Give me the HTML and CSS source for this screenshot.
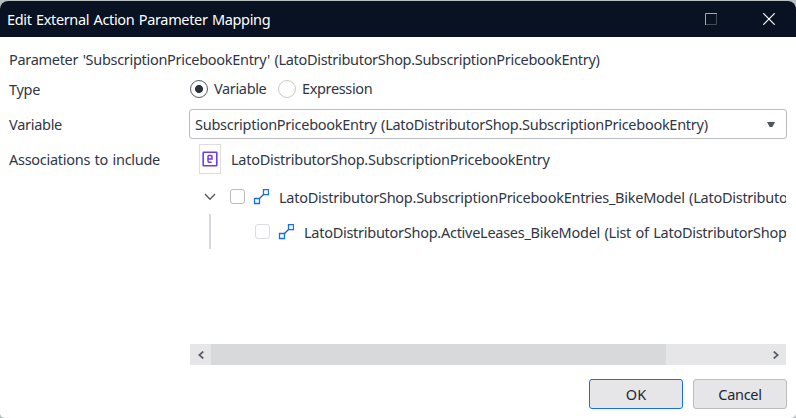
FILE: index.html
```html
<!DOCTYPE html>
<html lang="en">
<head>
<meta charset="utf-8">
<title>Edit External Action Parameter Mapping</title>
<link rel="stylesheet" href="styles.css">
</head>
<body>
<div class="dialog">
  <header class="titlebar">
    <span class="title">Edit External Action Parameter Mapping</span>
    <svg class="maximize" width="12" height="12" viewBox="0 0 12 12"><path d="M.5 12V.5H12" fill="none" stroke="#a4a9b0"/><path d="M1 11.5h10.5V1" fill="none" stroke="#454d58"/></svg>
    <svg class="close" width="12" height="12" viewBox="0 0 12 12"><path d="M.3.3l11.4 11.4M11.7.3L.3 11.7" stroke="#fff" stroke-width="1.2"/></svg>
  </header>
  <main class="content">
    <div class="param"><span class="param-text">Parameter 'SubscriptionPricebookEntry' (LatoDistributorShop.SubscriptionPricebookEntry)</span></div>
    <div class="row type-row">
      <span class="label">Type</span>
      <div class="radios">
        <span class="radio checked"></span><span class="radio-label first">Variable</span>
        <span class="radio"></span><span class="radio-label">Expression</span>
      </div>
    </div>
    <div class="row variable-row">
      <span class="label">Variable</span>
      <div class="select">
        <span class="select-text">SubscriptionPricebookEntry (LatoDistributorShop.SubscriptionPricebookEntry)</span>
        <svg width="8" height="5" viewBox="0 0 8 5"><path d="M0 0h8L5.3 5H2.7z" fill="#4e5362"/></svg>
      </div>
    </div>
    <div class="row assoc-row">
      <span class="label assoc-label">Associations to include</span>
      <div class="tree">
        <div class="root">
          <span class="entity-box"><svg width="16" height="16" viewBox="0 0 16 16"><rect x="1.2" y="1.2" width="13.6" height="13.6" rx=".5" fill="#fff" stroke="#6c3bf5" stroke-width="1.6"/><path d="M6 8h4V5.6Q10 4.6 9 4.6H7Q6 4.6 6 5.6V10Q6 11.2 7 11.2h2.6" fill="none" stroke="#6c3bf5" stroke-width="1.5"/></svg></span>
          <span class="root-text">LatoDistributorShop.SubscriptionPricebookEntry</span>
        </div>
        <div class="node level-one">
          <svg class="chevron" width="12" height="8" viewBox="0 0 12 8"><path d="M1 1l5 5.3L11 1" fill="none" stroke="#555b69" stroke-width="1.4"/></svg>
          <span class="check"></span>
          <svg class="assoc" width="16" height="16" viewBox="0 0 16 16"><path d="M6.5 9.5l4-4" stroke="#4d5566" stroke-width="1.2"/><path d="M1.5 9.5h5v5h-5zM10.5.6h5v5h-5z" fill="#fff" stroke="#146ff8" stroke-width="1.3"/></svg>
          <span class="node-text one">LatoDistributorShop.SubscriptionPricebookEntries_BikeModel (LatoDistributo</span>
        </div>
        <div class="node level-two">
          <span class="guide"></span>
          <span class="check disabled"></span>
          <svg class="assoc" width="16" height="16" viewBox="0 0 16 16"><path d="M6.5 9.5l4-4" stroke="#4d5566" stroke-width="1.2"/><path d="M1.5 9.5h5v5h-5zM10.5.6h5v5h-5z" fill="#fff" stroke="#146ff8" stroke-width="1.3"/></svg>
          <span class="node-text two">LatoDistributorShop.ActiveLeases_BikeModel (List of LatoDistributorShop</span>
        </div>
        <div class="scrollbar">
          <span class="arrow"><svg width="6" height="8" viewBox="0 0 6 8"><path d="M5.3.5L1.2 4l4.1 3.5" fill="none" stroke="#555b69" stroke-width="1.7"/></svg></span>
          <span class="thumb"></span>
          <span class="arrow end"><svg width="6" height="8" viewBox="0 0 6 8"><path d="M.7.5L4.8 4 .7 7.5" fill="none" stroke="#555b69" stroke-width="1.7"/></svg></span>
        </div>
      </div>
    </div>
    <footer class="actions">
      <button class="button primary"><span class="ok">OK</span></button>
      <button class="button"><span class="cancel">Cancel</span></button>
    </footer>
  </main>
</div>
</body>
</html>
```
FILE: styles.css
```css
* { box-sizing: border-box; }
body {
  margin: 0;
  background: #b9bebf;
  font-family: "Noto Sans", "Open Sans", sans-serif;
  font-size: 14.5px;
  line-height: 20px;
  word-spacing: 1px;
  color: #2f3646;
  overflow: hidden;
}
svg { display: block; flex: none; }
.dialog {
  width: 796px;
  height: 417px;
  margin-top: 1px;
  background: #fff;
  border-radius: 8px 8px 5px 5px;
  overflow: hidden;
}
.titlebar {
  height: 36px;
  background: #081222;
  color: #fff;
  display: flex;
  align-items: center;
  padding: 0 21px 0 7px;
}
.title { margin-right: auto; letter-spacing: -0.35px; white-space: nowrap; }
.maximize { margin-right: 46px; }
.content { padding: 7px 9px 0; }
.param { height: 30px; display: flex; align-items: center; }
.param-text, .select-text, .root-text, .node-text { white-space: nowrap; letter-spacing: -0.3px; }
.select-text, .root-text { letter-spacing: -0.27px; }
.node-text.one { letter-spacing: -0.26px; }
.node-text.two { letter-spacing: -0.27px; }
.row { display: grid; grid-template-columns: 180px 598px; align-items: center; }
.label { letter-spacing: -0.28px; }
.type-row { height: 28px; margin-top: 1px; }
.radios { display: flex; align-items: center; padding-left: 1px; letter-spacing: -0.35px; }
.radio { width: 18px; height: 18px; border: 1px solid #c9cacd; border-radius: 50%; }
.radio.checked { border-color: #555b69; background: radial-gradient(circle, #2b3140 3.6px, transparent 4.4px); }
.radio-label { margin-left: 6px; padding-bottom: 2px; }
.radio-label.first { width: 64px; }
.variable-row { height: 30px; margin-top: 6px; }
.select {
  height: 30px;
  border: 1px solid #b9bbc1;
  border-radius: 3px;
  display: flex;
  align-items: center;
  justify-content: space-between;
  padding: 0 11px 0 5px;
}
.assoc-row { margin-top: 5px; align-items: start; }
.assoc-label { line-height: 31px; }
.tree { width: 597px; padding-left: 1px; height: 222px; display: flex; flex-direction: column; overflow: hidden; }
.root { height: 30px; display: flex; align-items: center; padding-left: 9px; }
.entity-box { width: 22px; height: 30px; border: 1px solid #dededf; display: flex; align-items: center; justify-content: center; margin-right: 10px; }
.node { height: 35px; display: flex; align-items: center; }
.level-one { margin-top: 5px; padding-left: 14px; }
.chevron { margin-right: 14px; }
.check { width: 15px; height: 15px; border: 1px solid #b9bbc1; border-radius: 3px; margin-right: 8px; flex: none; }
.check.disabled { border-color: #dcdde0; }
.assoc { margin-right: 10px; }
.level-two { padding-left: 19px; }
.guide { width: 2px; height: 35px; background: #d8d9de; margin-right: 44px; flex: none; }
.scrollbar { margin-top: auto; margin-bottom: 1px; height: 21px; background: #e6e6e8; display: flex; }
.arrow { width: 21px; display: flex; align-items: center; justify-content: center; }
.arrow.end { margin-left: auto; }
.thumb { width: 455px; background: #d8d9da; }
.actions { margin-top: 13px; display: flex; justify-content: flex-end; gap: 10px; }
.button {
  width: 94px;
  height: 30px;
  padding: 0;
  font: inherit;
  color: #202636;
  background: #e6e6e8;
  border: 1px solid #b9bbc1;
  border-radius: 3px;
}
.button.primary { border-color: #146ff8; }
.cancel { letter-spacing: -0.3px; }
```
